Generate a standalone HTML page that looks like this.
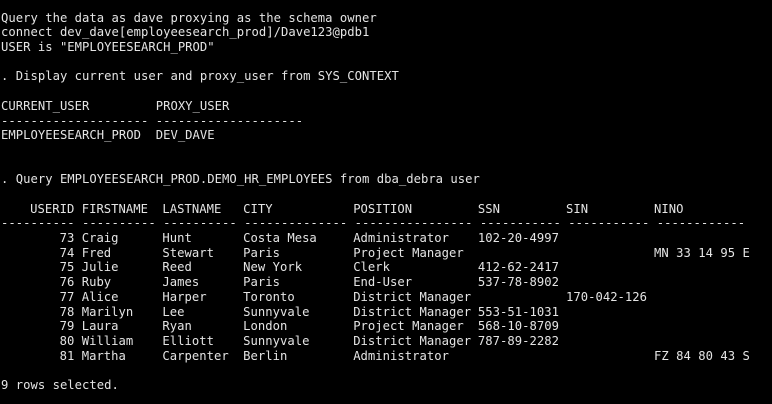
<!DOCTYPE html>
<html><head><meta charset="utf-8">
<style>
html,body{margin:0;padding:0;background:#000;}
body{width:772px;height:404px;overflow:hidden;font-family:"DejaVu Sans Mono","Liberation Mono",monospace;font-size:12.2px;letter-spacing:0.03px;color:#e4e4e4;}
#t{position:absolute;left:1px;top:10.6px;}
.l{position:relative;height:14.7px;line-height:14.7px;white-space:pre;}
.l span{position:absolute;top:0;white-space:pre;}
pre{margin:0;font:inherit;line-height:14.7px;}
</style></head><body>
<div id="t">
<pre>Query the data as dave proxying as the schema owner
connect dev_dave[employeesearch_prod]/Dave123@pdb1
USER is "EMPLOYEESEARCH_PROD"

. Display current user and proxy_user from SYS_CONTEXT

CURRENT_USER         PROXY_USER
-------------------- --------------------
EMPLOYEESEARCH_PROD  DEV_DAVE


. Query EMPLOYEESEARCH_PROD.DEMO_HR_EMPLOYEES from dba_debra user
</pre>
<div class="l"></div>
<div class="l"><span style="left:0;width:10ch;text-align:right">USERID</span><span style="left:11ch">FIRSTNAME</span><span style="left:22ch">LASTNAME</span><span style="left:33ch">CITY</span><span style="left:48ch">POSITION</span><span style="left:65ch">SSN</span><span style="left:77ch">SIN</span><span style="left:89ch">NINO</span></div>
<div class="l"><span style="left:0">---------- ---------- ---------- -------------- ---------------- ----------- ----------- ------------</span></div>
<div class="l"><span style="left:0;width:10ch;text-align:right">73</span><span style="left:11ch">Craig</span><span style="left:22ch">Hunt</span><span style="left:33ch">Costa Mesa</span><span style="left:48ch">Administrator</span><span style="left:65ch">102-20-4997</span></div>
<div class="l"><span style="left:0;width:10ch;text-align:right">74</span><span style="left:11ch">Fred</span><span style="left:22ch">Stewart</span><span style="left:33ch">Paris</span><span style="left:48ch">Project Manager</span><span style="left:89ch">MN 33 14 95 E</span></div>
<div class="l"><span style="left:0;width:10ch;text-align:right">75</span><span style="left:11ch">Julie</span><span style="left:22ch">Reed</span><span style="left:33ch">New York</span><span style="left:48ch">Clerk</span><span style="left:65ch">412-62-2417</span></div>
<div class="l"><span style="left:0;width:10ch;text-align:right">76</span><span style="left:11ch">Ruby</span><span style="left:22ch">James</span><span style="left:33ch">Paris</span><span style="left:48ch">End-User</span><span style="left:65ch">537-78-8902</span></div>
<div class="l"><span style="left:0;width:10ch;text-align:right">77</span><span style="left:11ch">Alice</span><span style="left:22ch">Harper</span><span style="left:33ch">Toronto</span><span style="left:48ch">District Manager</span><span style="left:77ch">170-042-126</span></div>
<div class="l"><span style="left:0;width:10ch;text-align:right">78</span><span style="left:11ch">Marilyn</span><span style="left:22ch">Lee</span><span style="left:33ch">Sunnyvale</span><span style="left:48ch">District Manager</span><span style="left:65ch">553-51-1031</span></div>
<div class="l"><span style="left:0;width:10ch;text-align:right">79</span><span style="left:11ch">Laura</span><span style="left:22ch">Ryan</span><span style="left:33ch">London</span><span style="left:48ch">Project Manager</span><span style="left:65ch">568-10-8709</span></div>
<div class="l"><span style="left:0;width:10ch;text-align:right">80</span><span style="left:11ch">William</span><span style="left:22ch">Elliott</span><span style="left:33ch">Sunnyvale</span><span style="left:48ch">District Manager</span><span style="left:65ch">787-89-2282</span></div>
<div class="l"><span style="left:0;width:10ch;text-align:right">81</span><span style="left:11ch">Martha</span><span style="left:22ch">Carpenter</span><span style="left:33ch">Berlin</span><span style="left:48ch">Administrator</span><span style="left:89ch">FZ 84 80 43 S</span></div>
<div class="l"></div>
<div class="l"><span style="left:0">9 rows selected.</span></div>
</div>
</body></html>
